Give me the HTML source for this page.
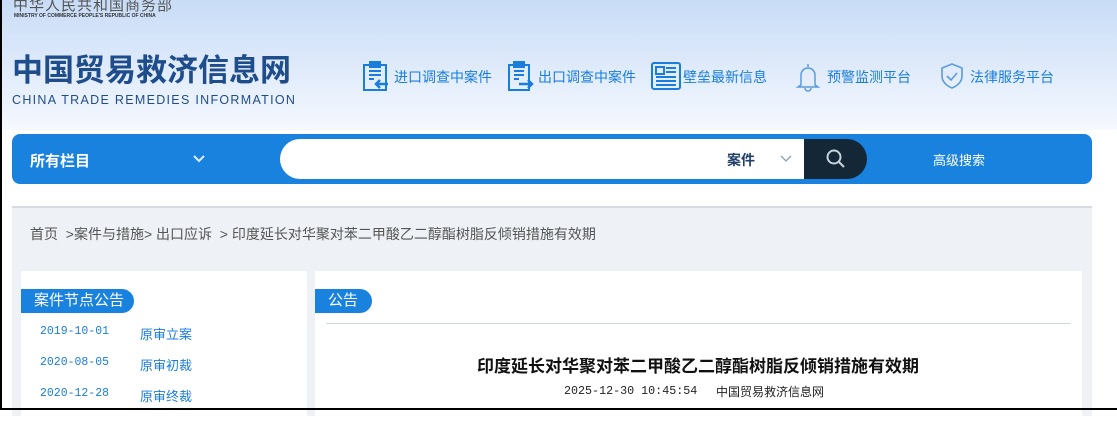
<!DOCTYPE html>
<html><head><meta charset="utf-8"><style>
*{margin:0;padding:0;box-sizing:border-box}
body{width:1117px;height:410px;overflow:hidden;font-family:"Liberation Sans","Noto Sans CJK SC",sans-serif;background:#fff;position:relative}
.hdr{position:absolute;left:0;top:0;width:1117px;height:130px;background:linear-gradient(#c8dcf7,#eef4fd 85%,#f6f9fe)}
.abs{position:absolute;white-space:nowrap}
.nav{color:#1a7ddc;font-size:14px;top:67px}
.bar{position:absolute;left:12px;top:134px;width:1080px;height:50px;background:#1982de;border-radius:8px}
.grey{position:absolute;left:12px;top:206px;width:1080px;height:210px;background:#eef1f5;border-top:2px solid #d6dce4}
.blk{position:absolute;background:#000}
.tag{position:absolute;height:24px;background:#1982de;color:#fff;font-size:15px;line-height:24px;padding-left:13px;border-radius:0 12px 12px 0}
.d{position:absolute;font-size:11.5px;color:#1a7ddc;font-family:"Liberation Mono","Noto Sans CJK SC",monospace}
</style></head><body>
<div class="hdr"></div>
<div class="abs" style="left:13px;top:-6px;font-size:15px;color:#555;letter-spacing:1px">中华人民共和国商务部</div>
<div class="abs" style="left:14px;top:13px;font-size:5px;color:#333;font-weight:bold">MINISTRY OF COMMERCE PEOPLE'S REPUBLIC OF CHINA</div>
<div class="abs" style="left:12px;top:52px;font-size:31px;font-weight:bold;color:#1f4d8c;letter-spacing:0;line-height:38px">中国贸易救济信息网</div>
<div class="abs" style="left:12px;top:93px;font-size:12.5px;color:#1f4d8c;letter-spacing:1.3px">CHINA TRADE REMEDIES INFORMATION</div>

<svg class="abs" style="left:362px;top:61px" width="28" height="30" viewBox="0 0 28 30" fill="none" stroke="#1a7ddc" stroke-width="2"><rect x="2" y="4" width="22" height="25"/><rect x="8" y="1" width="10" height="5" fill="#1a7ddc"/><path d="M7 10h12M7 14h12M7 18h5"/><path d="M26 23h-12M18 19l-4 4 4 4" stroke-width="2.5"/></svg>
<div class="abs nav" style="left:394px">进口调查中案件</div>
<svg class="abs" style="left:507px;top:61px" width="28" height="30" viewBox="0 0 28 30" fill="none" stroke="#1a7ddc" stroke-width="2"><rect x="2" y="4" width="20" height="25"/><rect x="7" y="1" width="10" height="5" fill="#1a7ddc"/><path d="M7 10h10M7 14h10M7 18h5"/><path d="M12 23h13M21 19l4 4-4 4" stroke-width="2.5"/></svg>
<div class="abs nav" style="left:538px">出口调查中案件</div>
<svg class="abs" style="left:651px;top:62px" width="30" height="28" viewBox="0 0 30 28" fill="none" stroke="#1a7ddc" stroke-width="2"><rect x="1" y="1" width="28" height="26" rx="2"/><rect x="5" y="5" width="8" height="7"/><path d="M15 6h10M15 10h10M5 15h20M5 19h20M5 23h20"/></svg>
<div class="abs nav" style="left:683px">壁垒最新信息</div>
<svg class="abs" style="left:795px;top:61px" width="26" height="32" viewBox="0 0 26 32" fill="none" stroke="#5a9be0" stroke-width="1.5"><path d="M13 3v3M6 24V14a7 7 0 0 1 14 0v10l3 2H3z"/><path d="M10 27a3 3 0 0 0 6 0"/></svg>
<div class="abs nav" style="left:827px">预警监测平台</div>
<svg class="abs" style="left:939px;top:62px" width="26" height="28" viewBox="0 0 26 28" fill="none" stroke="#5a9be0" stroke-width="1.6"><path d="M13 2l10 4v8c0 6-5 10-10 12C8 24 3 20 3 14V6z"/><path d="M8 14l4 4 6-7"/></svg>
<div class="abs nav" style="left:970px">法律服务平台</div>

<div class="bar"></div>
<div class="abs" style="left:30px;top:150px;font-size:15px;font-weight:bold;color:#fff">所有栏目</div>
<svg class="abs" style="left:192px;top:154px" width="14" height="10" viewBox="0 0 14 10" fill="none" stroke="#e0ecfa" stroke-width="2"><path d="M2 2l5 5 5-5"/></svg>
<div class="abs" style="left:280px;top:139px;width:530px;height:40px;background:#fff;border-radius:20px 0 0 20px"></div>
<div class="abs" style="left:727px;top:150px;font-size:14px;font-weight:bold;color:#1f3e6c">案件</div>
<svg class="abs" style="left:780px;top:155px" width="12" height="8" viewBox="0 0 12 8" fill="none" stroke="#8aa0bd" stroke-width="1.3"><path d="M1 1l5 5 5-5"/></svg>
<div class="abs" style="left:804px;top:139px;width:63px;height:40px;background:#132737;border-radius:0 20px 20px 0"></div>
<svg class="abs" style="left:825px;top:148px" width="22" height="22" viewBox="0 0 22 22" fill="none" stroke="#c8d2dc" stroke-width="2"><circle cx="9" cy="9" r="6.5"/><path d="M14 14l5 5"/></svg>
<div class="abs" style="left:933px;top:150px;font-size:13px;color:#fff">高级搜索</div>

<div class="grey"></div>
<div class="abs" style="left:30px;top:224px;font-size:14px;color:#555">首页 &nbsp;&gt;案件与措施&gt; 出口应诉 &nbsp;&gt; 印度延长对华聚对苯二甲酸乙二醇酯树脂反倾销措施有效期</div>
<div class="abs" style="left:21px;top:271px;width:286px;height:150px;background:#fff"></div>
<div class="abs" style="left:315px;top:271px;width:767px;height:150px;background:#fff"></div>
<div class="tag" style="left:21px;top:289px;width:113px">案件节点公告</div>
<div class="tag" style="left:315px;top:289px;width:57px">公告</div>
<div class="abs" style="left:326px;top:323px;width:745px;height:1px;background:#d0d8e2"></div>
<div class="d" style="left:40px;top:325px">2019-10-01</div><div class="abs" style="left:140px;top:324px;font-size:13px;color:#1a7ddc">原审立案</div>
<div class="d" style="left:40px;top:356px">2020-08-05</div><div class="abs" style="left:140px;top:355px;font-size:13px;color:#1a7ddc">原审初裁</div>
<div class="d" style="left:40px;top:387px">2020-12-28</div><div class="abs" style="left:140px;top:386px;font-size:13px;color:#1a7ddc">原审终裁</div>
<div class="abs" style="left:477px;top:352px;font-size:17px;font-weight:bold;color:#111">印度延长对华聚对苯二甲酸乙二醇酯树脂反倾销措施有效期</div>
<div class="abs" style="left:564px;top:384px;font-size:11.7px;color:#222;font-family:'Liberation Mono','Noto Sans CJK SC',monospace">2025-12-30 10:45:54</div>
<div class="abs" style="left:716px;top:383px;font-size:12px;color:#222">中国贸易救济信息网</div>
<div class="blk" style="left:0;top:0;width:2px;height:410px"></div>
<div class="blk" style="left:0;top:408px;width:1117px;height:2px"></div>
</body></html>
